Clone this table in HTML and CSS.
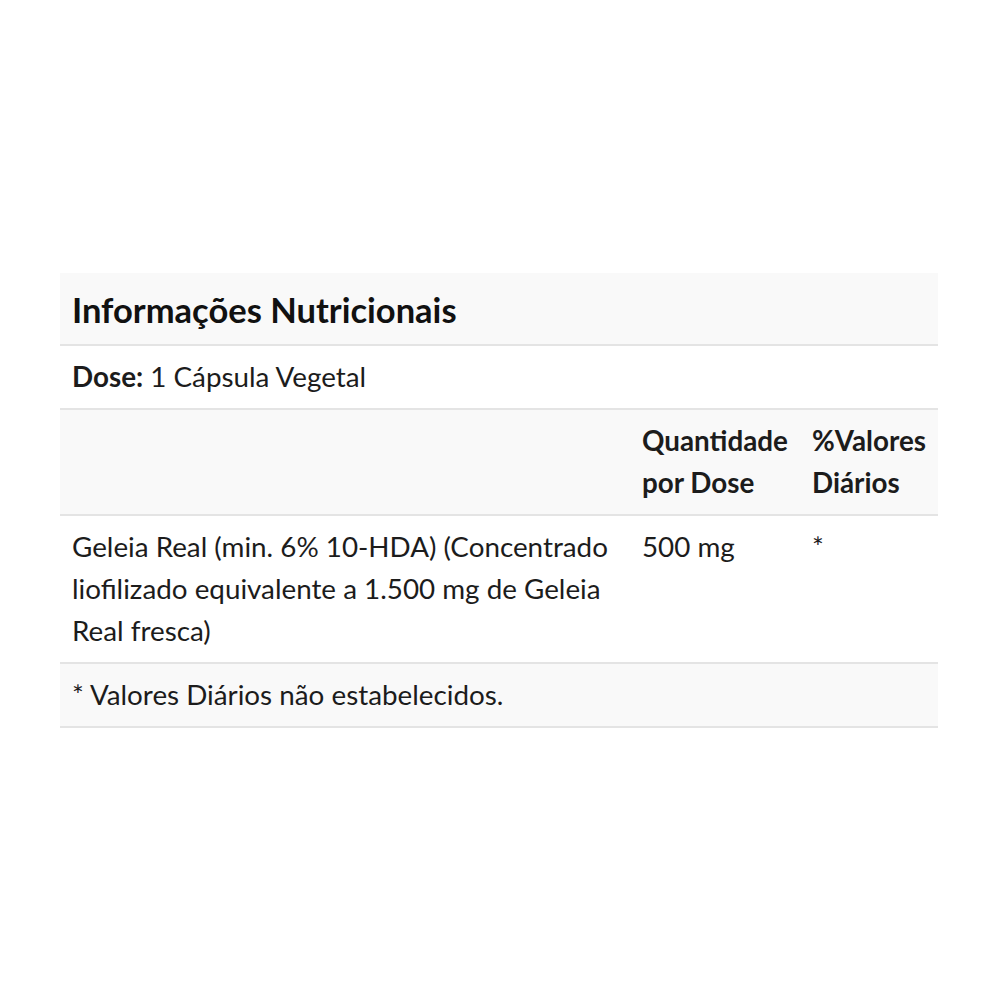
FILE: index.html
```html
<!DOCTYPE html>
<html lang="pt">
<head>
<meta charset="utf-8">
<link rel="stylesheet" href="styles.css">
</head>
<body>
<div class="page">
  <table class="nutri">
    <colgroup>
      <col class="c1"><col class="c2"><col class="c3">
    </colgroup>
    <tr class="title-row grey"><th colspan="3" class="title">Informações Nutricionais</th></tr>
    <tr><td colspan="3"><b>Dose:</b> 1 Cápsula Vegetal</td></tr>
    <tr class="grey head"><td></td><th>Quantidade por Dose</th><th>%Valores Diários</th></tr>
    <tr><td>Geleia Real (min. 6% 10-HDA) (Concentrado liofilizado equivalente a 1.500 mg de Geleia Real fresca)</td><td>500 mg</td><td>*</td></tr>
    <tr class="grey"><td colspan="3">* Valores Diários não estabelecidos.</td></tr>
  </table>
</div>
</body>
</html>
```
FILE: styles.css
```css
html, body {
  margin: 0;
  padding: 0;
  background: #fff;
}
.page {
  padding: 273px 62px 0 60px;
  font-family: Lato, "Open Sans", sans-serif;
  color: #1c1c1c;
}
.nutri {
  width: 878px;
  border-collapse: collapse;
  font-size: 27.8px;
  line-height: 42px;
}
.c1 { width: 570px; }
.c2 { width: 170px; }
.c3 { width: 138px; }
.nutri td, .nutri th {
  padding: 10px 12px 10px;
  text-align: left;
  vertical-align: top;
  border-bottom: 2px solid #e4e4e4;
}
.nutri th { font-weight: 700; }
.grey td, .grey th { background: #f9f9f9; }
.title {
  font-size: 34.5px;
  line-height: 50px;
  padding: 12px 12px 9px !important;
  color: #111;
}
b { font-weight: 700; }
```
